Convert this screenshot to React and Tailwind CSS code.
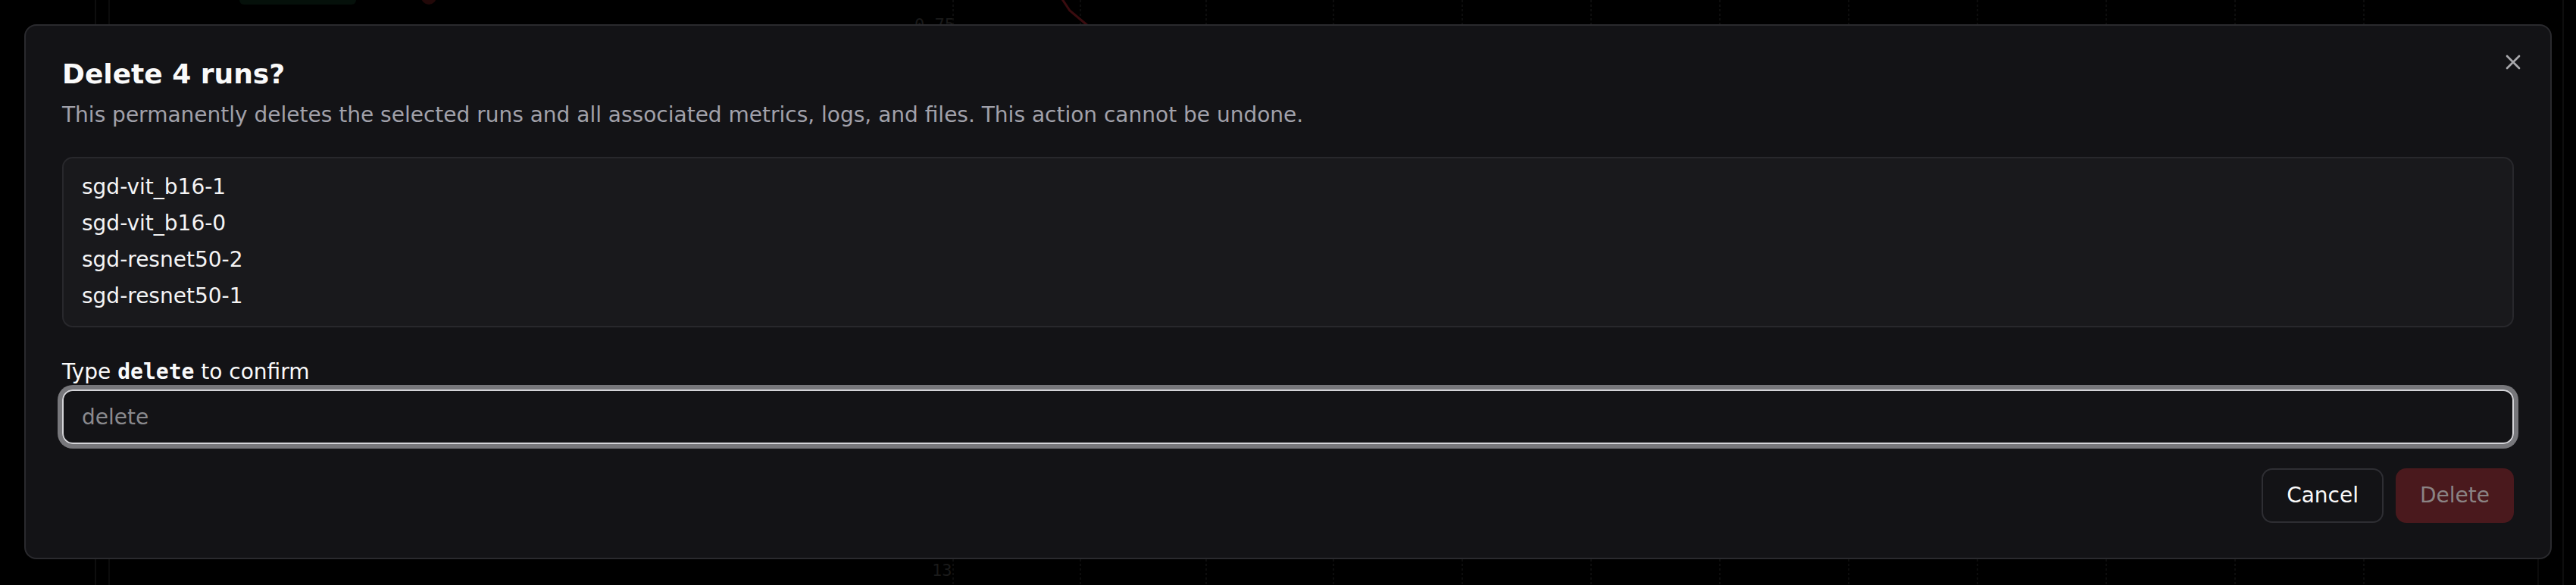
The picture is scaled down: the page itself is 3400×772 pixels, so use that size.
import { X } from 'lucide-react'

const runs = ['sgd-vit_b16-1', 'sgd-vit_b16-0', 'sgd-resnet50-2', 'sgd-resnet50-1']

// faint chart left behind the overlay
function Backdrop() {
  const grid = [1258, 1426, 1592, 1760, 1930, 2100, 2270, 2440, 2610, 2780, 2950, 3120]
  return (
    <svg className="absolute inset-0 h-full w-full" width="3400" height="772">
      <line x1="126" y1="0" x2="126" y2="772" stroke="#0e0e0e" strokeWidth="2" />
      <line x1="144" y1="0" x2="144" y2="772" stroke="#0b0b0b" strokeWidth="2" />
      <line x1="3383" y1="0" x2="3383" y2="772" stroke="#0d0d0d" strokeWidth="2" />
      <line x1="3350" y1="738" x2="3350" y2="772" stroke="#0b0b0b" strokeWidth="2" />
      {grid.map((x) => (
        <line key={x} x1={x} y1="0" x2={x} y2="772" stroke="#0d0d0d" strokeWidth="2" strokeDasharray="3 3" />
      ))}
      <rect x="316" y="-10" width="154" height="16" rx="6" fill="#05100a" />
      <circle cx="566" cy="-4" r="10" fill="#220808" />
      <path d="M1400 -4 L1412 14 L1436 34" stroke="#3a0c0f" strokeWidth="3" fill="none" />
      <text x="1207" y="40" fill="#1a1a1a" fontSize="22" fontFamily="DejaVu Sans Mono">0.75</text>
      <text x="1230" y="760" fill="#1a1a1a" fontSize="22" fontFamily="DejaVu Sans Mono">13</text>
    </svg>
  )
}

export default function App() {
  return (
    <div className="relative min-h-[772px] overflow-hidden bg-black font-['DejaVu_Sans',sans-serif]">
      <Backdrop />

      <div className="relative px-8 pt-8">
        <div className="relative rounded-[16px] border-2 border-[#2a2a2e] bg-[#131316] px-12 py-[46px]">
          <button className="absolute right-[33px] top-8 text-[#a8a8ac]">
            <X size={32} strokeWidth={2} />
          </button>

          <h2 className="text-[36px] font-bold leading-none text-[#fafafa]">Delete 4 runs?</h2>
          <p className="mt-4 text-[28px] leading-[40px] text-[#a1a1aa]">
            This permanently deletes the selected runs and all associated metrics, logs, and files. This action cannot be
            undone.
          </p>

          <ul className="mt-[35px] flex flex-col gap-2 rounded-[14px] border-2 border-[#28282c] bg-[#19191c] px-6 pb-[19px] pt-[18px]">
            {runs.map((name) => (
              <li key={name} className="text-[28px] leading-[40px] text-[#f4f4f5]">
                {name}
              </li>
            ))}
          </ul>

          <label className="mt-[39px] block text-[28px] leading-[40px] text-[#fafafa]">
            Type <code className="font-['DejaVu_Sans_Mono',monospace] font-bold">delete</code> to confirm
          </label>
          <input
            readOnly
            placeholder="delete"
            className="mt-[3px] h-[72px] w-full rounded-[14px] border-2 border-[#d4d4d8] bg-transparent px-6 text-[28px] text-white outline-none ring-[6px] ring-[#77777b] placeholder:text-[#8a8a8e]"
          />

          <div className="mt-8 flex justify-end gap-4">
            <button className="h-[72px] rounded-[14px] border-2 border-[#2e2e33] px-[31px] text-[28px] text-[#fafafa]">
              Cancel
            </button>
            <button disabled className="h-[72px] rounded-[14px] bg-[#4a191d] px-8 text-[28px] text-[#8a8384]">
              Delete
            </button>
          </div>
        </div>
      </div>
    </div>
  )
}
